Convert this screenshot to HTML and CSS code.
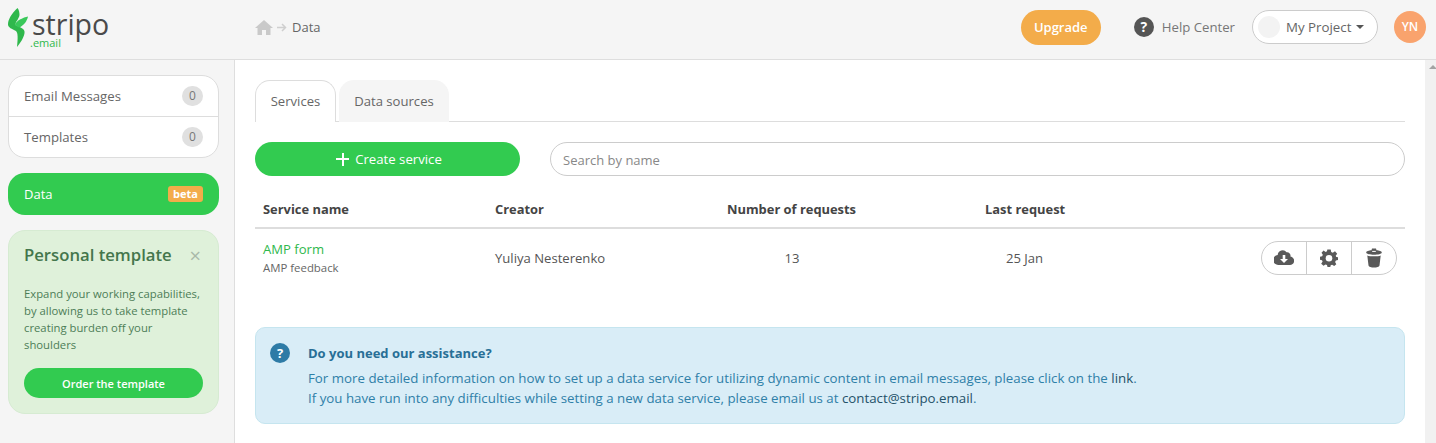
FILE: index.html
```html
<!DOCTYPE html>
<html lang="en">
<head>
<meta charset="utf-8">
<title>Stripo - Data</title>
<link rel="stylesheet" href="styles.css">
</head>
<body>
<header class="topbar">
  <div class="logo">
    <svg class="logo-mark" width="20" height="40" viewBox="0 0 20 40"><path d="M9.500 0 C3 6 0 12 0 16.500 C0 19.500 4 21 8 23 C10 25 10 30 9 39 C14 33 17 27 16.500 23.500 C16 20 11 19 7.500 17 C7 14 11 11 11.500 7 C11.500 4 11 2 9.500 0 Z" fill="#2fb84c"/><path d="M20 8.500 C15 9.500 9 12.500 7 16 C7 17 8 18 11 19.500 C16 17.500 19 13 20 8.500 Z" fill="#3ac85a"/></svg>
    <div class="logo-text"><span class="logo-name">stripo</span><span class="logo-sub">.email</span></div>
  </div>
  <nav class="crumbs">
    <svg width="18" height="15" viewBox="0 0 18 15"><path d="M9 0 L18 8 H15.500 V15 H11 V10 H7 V15 H2.500 V8 H0 Z" fill="#c9c9c9"/></svg>
    <svg width="10" height="9" viewBox="0 0 10 9"><path d="M0 4.500 H8 M5 1 L8.500 4.500 L5 8" fill="none" stroke="#cfcfcf" stroke-width="1.500"/></svg>
    <span class="crumb-text">Data</span>
  </nav>
  <div class="top-right">
    <button class="upgrade">Upgrade</button>
    <span class="help"><span class="help-icon">?</span>Help Center</span>
    <button class="project"><span class="project-dot"></span>My Project<span class="caret"></span></button>
    <span class="avatar">YN</span>
  </div>
</header>
<div class="body-row">
  <aside class="sidebar">
    <ul class="menu">
      <li class="menu-item"><span>Email Messages</span><span class="count">0</span></li>
      <li class="menu-item"><span>Templates</span><span class="count">0</span></li>
    </ul>
    <div class="data-item"><span>Data</span><span class="beta">beta</span></div>
    <section class="promo">
      <div class="promo-head"><h2>Personal template</h2><span class="promo-close">×</span></div>
      <p>Expand your working capabilities, by allowing us to take template creating burden off your shoulders</p>
      <button class="promo-btn">Order the template</button>
    </section>
  </aside>
  <main class="content">
    <div class="tabs">
      <span class="tab tab-active">Services</span>
      <span class="tab">Data sources</span>
    </div>
    <div class="toolbar">
      <button class="create"><span class="plus"></span>Create service</button>
      <input class="search" type="text" placeholder="Search by name">
    </div>
    <div class="table-head">
      <span>Service name</span><span>Creator</span><span>Number of requests</span><span>Last request</span>
    </div>
    <div class="table-row">
      <div class="svc"><a class="svc-name">AMP form</a><span class="svc-type">AMP feedback</span></div>
      <span>Yuliya Nesterenko</span>
      <span class="num">13</span>
      <span class="date">25 Jan</span>
      <div class="actions">
        <span class="action"><svg width="20" height="16" viewBox="0 0 20 16"><path d="M16.400 6.600 A3.500 3.500 0 0 0 12.600 2.200 A5 5 0 0 0 3.700 5.100 A4.400 4.400 0 0 0 4.600 15 H15.500 A4.200 4.200 0 0 0 16.400 6.600 Z" fill="#595959"/><path d="M8.700 5 H11.300 V9 H14 L10 13 L6 9 H8.700 Z" fill="#fff"/></svg></span>
        <span class="action"><svg width="18" height="18" viewBox="0 0 18 18"><path d="M7.300 0.500 H10.700 L11.200 3 L12.800 3.700 L15 2.300 L17.200 4.700 L15.700 6.800 L16.300 8 L18 8.300 V11 L15.900 11.500 L15.100 13.100 L16.300 15.200 L14.200 17 L12.100 15.700 L10.700 16.300 L10.300 18 H7.500 L7 16.100 L5.500 15.500 L3.500 16.800 L1.200 14.700 L2.600 12.600 L2 11.300 L0 10.800 V7.700 L2.200 7.200 L2.800 5.700 L1.500 3.700 L3.600 1.500 L5.600 2.900 L7 2.300 Z" fill="#595959"/><circle cx="9" cy="9.300" r="3.300" fill="#fff"/></svg></span>
        <span class="action"><svg width="16" height="20" viewBox="0 0 16 20"><path d="M6 0.500 H10 L10.500 2.200 C13 2.400 15.800 3 15.800 4.500 C15.800 6 12 6.700 8 6.700 C4 6.700 0.200 6 0.200 4.500 C0.200 3 3 2.400 5.500 2.200 Z" fill="#595959"/><path d="M1.300 7.400 C4 8.600 12 8.600 14.700 7.400 L13.500 17.500 C13 20.300 3 20.300 2.500 17.500 Z" fill="#595959"/><path d="M6.200 3.400 H9.800" stroke="#fff" stroke-width="1"/></svg></span>
      </div>
    </div>
    <section class="notice">
      <span class="notice-icon">?</span>
      <div class="notice-body">
        <h3>Do you need our assistance?</h3>
        <p>For more detailed information on how to set up a data service for utilizing dynamic content in email messages, please click on the <a>link</a>.</p>
        <p>If you have run into any difficulties while setting a new data service, please email us at <a>contact@stripo.email</a>.</p>
      </div>
    </section>
  </main>
  <div class="scrollbar"><span class="scroll-up"></span></div>
</div>
</body>
</html>
```
FILE: styles.css
```css
* { box-sizing: border-box; }
html, body { margin: 0; height: 100%; overflow: hidden; }
body { display: flex; flex-direction: column; font-family: "Open Sans", "Noto Sans", sans-serif; font-size: 13px; color: #555; background: #f5f5f5; }
button { font-family: inherit; cursor: pointer; }
h2, h3, p, ul { margin: 0; padding: 0; }

.topbar { height: 60px; flex: none; display: flex; align-items: center; background: #f5f5f5; border-bottom: 1px solid #dedede; padding: 0 10px 5px 0; }
.logo { width: 255px; flex: none; display: flex; align-items: flex-start; padding: 2px 0 0 8px; }
.logo-mark { display: block; }
.logo-text { display: flex; flex-direction: column; margin: 3px 0 0 4px; }
.logo-name { font-size: 28.500px; line-height: 26px; color: #4a4a4a; }
.logo-sub { font-size: 11px; line-height: 11px; color: #2fb84c; margin-left: -2px; }
.crumbs { display: flex; align-items: center; gap: 4px; }
.crumb-text { font-size: 13px; color: #666; margin-left: 1px; }
.top-right { margin-left: auto; display: flex; align-items: center; }
.upgrade { width: 80px; height: 35px; border: 0; border-radius: 18px; background: #f3ac4a; color: #fff; font-size: 13px; font-weight: 600; padding: 0; }
.help { display: flex; align-items: center; margin-left: 33px; color: #777; font-size: 13.200px; }
.help-icon { width: 20px; height: 20px; border-radius: 50%; background: #555; color: #fff; font-weight: 700; font-size: 14px; line-height: 20px; text-align: center; margin-right: 8px; }
.project { width: 126px; height: 34px; margin-left: 17px; border: 1px solid #ccc; border-radius: 17px; background: #fff; display: flex; align-items: center; padding: 0 0 0 5px; color: #666; font-size: 13.300px; }
.project-dot { width: 22px; height: 22px; border-radius: 50%; background: #f3f3f3; margin-right: 6px; }
.caret { width: 0; height: 0; margin-left: 5px; border: 4px solid transparent; border-top-color: #555; border-bottom: 0; }
.avatar { width: 32px; height: 32px; margin-left: 16px; border-radius: 50%; background: #f9a36d; color: #fff; font-size: 12px; font-weight: 600; line-height: 32px; text-align: center; }

.body-row { flex: 1; min-height: 0; display: flex; }
.sidebar { width: 235px; flex: none; border-right: 1px solid #dedede; padding: 15px 15px 0 8px; display: flex; flex-direction: column; gap: 15px; }
.menu { list-style: none; background: #fff; border: 1px solid #ddd; border-radius: 17px; }
.menu-item { height: 40px; display: flex; align-items: center; justify-content: space-between; padding: 0 15px; color: #666; font-size: 13.200px; }
.menu-item + .menu-item { height: 41px; border-top: 1px solid #ddd; }
.count { width: 21px; height: 20px; border-radius: 10px; background: #e0e0e0; color: #777; font-size: 12px; line-height: 20px; text-align: center; }
.data-item { height: 42px; display: flex; align-items: center; justify-content: space-between; padding: 0 16px; border-radius: 17px; background: #32cb50; color: #fff; }
.beta { width: 35px; height: 16px; border-radius: 3px; background: #f3ac4a; font-size: 11px; font-weight: 700; line-height: 15px; text-align: center; }
.promo { height: 184px; background: #dff1da; border: 1px solid #d6ebd2; border-radius: 17px; padding: 11px 15px 0; color: #4d7d57; }
.promo-head { display: flex; align-items: center; justify-content: space-between; margin-right: 2px; }
.promo h2 { font-size: 16.700px; line-height: 24px; font-weight: 600; color: #44764c; white-space: nowrap; }
.promo-close { font-size: 20px; line-height: 24px; color: #a9b9a9; margin-top: 2px; }
.promo p { margin-top: 17px; width: 182px; font-size: 11.300px; line-height: 17px; }
.promo-btn { width: 179px; height: 30px; margin-top: 15px; border: 0; border-radius: 15px; background: #32cb50; color: #fff; font-size: 11px; font-weight: 600; padding: 0; }

.content { flex: 1; min-width: 0; background: #fff; padding: 20px 20px 0; }
.tabs { height: 42px; display: flex; gap: 3px; border-bottom: 1px solid #ddd; }
.tab { width: 110px; height: 42px; padding-top: 12px; background: #f5f5f5; border-radius: 15px 15px 0 0; color: #666; font-size: 13.100px; text-align: center; }
.tab-active { width: 81px; background: #fff; border: 1px solid #ddd; border-bottom: 0; padding-top: 11px; }
.toolbar { display: flex; gap: 30px; margin-top: 20px; }
.create { width: 265px; height: 34px; flex: none; border: 0; border-radius: 17px; background: #32cb50; color: #fff; font-size: 13.200px; display: flex; align-items: center; justify-content: center; gap: 6px; padding: 0 0 0 3px; }
.plus { width: 13px; height: 13px; background: linear-gradient(#fff, #fff) center / 13px 2px no-repeat, linear-gradient(#fff, #fff) center / 2px 13px no-repeat; }
.search { flex: 1; height: 34px; border: 1px solid #ccc; border-radius: 17px; padding: 2px 12px 0; font-family: inherit; font-size: 13px; background: #fff; }
.search::placeholder { color: #888; }
.table-head, .table-row { display: grid; grid-template-columns: 232px 232px 258px 1fr auto; padding-left: 8px; align-items: center; }
.table-head { height: 53px; padding-top: 15px; border-bottom: 2px solid #ddd; font-weight: 700; color: #444; font-size: 12.900px; }
.table-row { height: 58px; padding-right: 8px; color: #555; font-size: 13.100px; }
.svc { display: flex; flex-direction: column; }
.svc-name { color: #2fb84c; line-height: 20px; margin-top: -2px; }
.svc-type { font-size: 11.400px; line-height: 17px; color: #666; }
.num { width: 130px; text-align: center; }
.date { width: 79px; text-align: center; }
.actions { width: 136px; height: 34px; display: flex; border: 1px solid #ccc; border-radius: 17px; }
.action { flex: 1; display: flex; align-items: center; justify-content: center; }
.action + .action { border-left: 1px solid #ccc; }
.notice { height: 97px; margin-top: 40px; display: flex; background: #d9edf7; border: 1px solid #c5e5ef; border-radius: 10px; padding: 15px 14px; color: #31708f; }
.notice-icon { width: 20px; height: 20px; flex: none; border-radius: 50%; background: #2e7ba6; color: #fff; font-weight: 700; font-size: 13px; line-height: 20px; text-align: center; }
.notice-body { margin-left: 18px; }
.notice h3 { font-size: 13px; line-height: 20px; font-weight: 700; color: #286f96; }
.notice p { line-height: 20px; font-size: 13.300px; color: #2f80a8; }
.notice p:first-of-type { margin-top: 5px; }
.notice a { color: #245269; }

.scrollbar { width: 11px; flex: none; background: #f1f1f1; padding-top: 5px; }
.scroll-up { display: block; width: 0; height: 0; margin-left: 4px; border: 4px solid transparent; border-bottom: 4px solid #a3a3a3; border-top: 0; }
```
